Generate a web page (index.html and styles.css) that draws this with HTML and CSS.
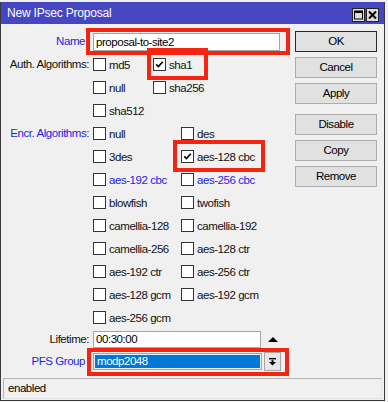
FILE: index.html
```html
<!DOCTYPE html>
<html>
<head>
<meta charset="utf-8">
<link rel="stylesheet" href="styles.css">
</head>
<body>
<div class="window">
  <div class="titlebar">
    <span class="title">New IPsec Proposal</span>
    <span class="tbtns">
      <span class="tbtn"><svg width="11" height="12" viewBox="0 0 11 12"><rect x="1.5" y="2" width="8" height="8" fill="none" stroke="#000" stroke-width="1"/><rect x="1.5" y="2" width="8" height="2" fill="#000"/></svg></span>
      <span class="tbtn"><svg width="11" height="12" viewBox="0 0 11 12"><path d="M2 2.5 L9 9.5 M9 2.5 L2 9.5" stroke="#000" stroke-width="2"/></svg></span>
    </span>
  </div>
  <div class="main">
    <div class="form">
      <div class="row">
        <div class="lbl blue pad">Name</div>
        <div class="field">
          <span class="hl hl-name"><span class="input name-input">proposal-to-site2</span></span>
        </div>
      </div>
      <div class="row">
        <div class="lbl">Auth. Algorithms:</div>
        <div class="checks auth">
          <span class="cb"><span class="box"></span>md5</span>
          <span class="cb hl hl-sha1"><span class="box"><svg width="11" height="11" viewBox="0 0 11 11"><path d="M2.2 5.4 L4.4 7.6 L8.8 2.8" fill="none" stroke="#000" stroke-width="1.7"/></svg></span>sha1</span>
          <span class="cb"><span class="box"></span>null</span>
          <span class="cb"><span class="box"></span>sha256</span>
          <span class="cb"><span class="box"></span>sha512</span>
        </div>
      </div>
      <div class="row">
        <div class="lbl blue">Encr. Algorithms:</div>
        <div class="checks encr">
          <span class="cb"><span class="box"></span>null</span>
          <span class="cb"><span class="box"></span>des</span>
          <span class="cb"><span class="box"></span>3des</span>
          <span class="cb hl hl-aes"><span class="box"><svg width="11" height="11" viewBox="0 0 11 11"><path d="M2.2 5.4 L4.4 7.6 L8.8 2.8" fill="none" stroke="#000" stroke-width="1.7"/></svg></span>aes-128 cbc</span>
          <span class="cb blue"><span class="box"></span>aes-192 cbc</span>
          <span class="cb blue"><span class="box"></span>aes-256 cbc</span>
          <span class="cb"><span class="box"></span>blowfish</span>
          <span class="cb"><span class="box"></span>twofish</span>
          <span class="cb"><span class="box"></span>camellia-128</span>
          <span class="cb"><span class="box"></span>camellia-192</span>
          <span class="cb"><span class="box"></span>camellia-256</span>
          <span class="cb"><span class="box"></span>aes-128 ctr</span>
          <span class="cb"><span class="box"></span>aes-192 ctr</span>
          <span class="cb"><span class="box"></span>aes-256 ctr</span>
          <span class="cb"><span class="box"></span>aes-128 gcm</span>
          <span class="cb"><span class="box"></span>aes-192 gcm</span>
          <span class="cb"><span class="box"></span>aes-256 gcm</span>
        </div>
      </div>
      <div class="row life">
        <div class="lbl">Lifetime:</div>
        <div class="field">
          <span class="input life-input">00:30:00</span>
          <span class="uptri"></span>
        </div>
      </div>
      <div class="row pfs">
        <div class="lbl blue pad">PFS Group</div>
        <div class="field">
          <span class="hl hl-pfs">
            <span class="select">modp2048</span>
            <span class="dd"><svg width="9" height="10" viewBox="0 0 9 10"><rect x="1" y="1" width="7" height="1.4" fill="#000"/><rect x="3.5" y="3.2" width="2" height="2" fill="#000"/><path d="M1 5 H8 L4.5 8.6 Z" fill="#000"/></svg></span>
          </span>
        </div>
      </div>
    </div>
    <div class="actions">
      <span class="btn default">OK</span>
      <span class="btn">Cancel</span>
      <span class="btn">Apply</span>
      <span class="btn sep">Disable</span>
      <span class="btn">Copy</span>
      <span class="btn">Remove</span>
    </div>
  </div>
  <div class="status">enabled</div>
</div>
</body>
</html>
```

FILE: styles.css
```css
html, body {
  margin: 0;
  padding: 0;
}
body {
  width: 388px;
  height: 402px;
  overflow: hidden;
  background: #f0f0f0;
  font-family: "Liberation Sans", Arial, sans-serif;
  font-size: 11.5px;
  letter-spacing: -0.45px;
  color: #111;
}
.window {
  margin-top: 2px;
  width: 385px;
  height: 399px;
  box-sizing: border-box;
  border: 1px solid #3a3a3a;
  border-top: none;
  background: #f0f0f0;
  display: flex;
  flex-direction: column;
}
.titlebar {
  height: 22px;
  background: #4646c3;
  display: flex;
  justify-content: space-between;
  align-items: flex-end;
  padding: 0 5px 2px 6px;
  box-sizing: border-box;
}
.title {
  color: #fff;
  font-size: 12px;
  letter-spacing: -0.2px;
  line-height: 20px;
  align-self: center;
  padding-top: 2px;
}
.tbtns {
  display: flex;
  gap: 1px;
}
.tbtn {
  width: 13px;
  height: 14px;
  box-sizing: border-box;
  border: 1px solid #222;
  background: #dcdcdc;
  display: flex;
  align-items: center;
  justify-content: center;
}
.tbtn svg { display: block; }
.main {
  display: flex;
  padding-top: 6px;
}
.form {
  flex: 1;
}
.row {
  display: grid;
  grid-template-columns: 88px 1fr;
  column-gap: 4px;
  align-items: start;
}
.lbl {
  text-align: right;
  line-height: 23px;
  white-space: nowrap;
}
.lbl.pad { padding-right: 4px; }
.blue { color: #1c1cf2; }
.field {
  height: 23px;
  display: flex;
  align-items: center;
}
.hl {
  position: relative;
}
.hl::after {
  content: "";
  position: absolute;
  border: 4px solid #f52410;
  pointer-events: none;
}
.hl-name::after { left: -7px; top: -5px; right: -10px; bottom: -4px; }
.hl-sha1::after { left: -6px; top: -5px; right: -16px; bottom: -4px; }
.hl-aes::after { left: -8px; top: -5px; right: -10px; bottom: -4px; }
.hl-pfs::after { left: -6px; top: -4px; right: -8px; bottom: -5px; }
.input {
  display: block;
  box-sizing: border-box;
  background: #fff;
  border: 1px solid #a5a5a5;
  padding-left: 2px;
  color: #000;
}
.name-input {
  width: 187px;
  height: 18px;
  line-height: 16px;
}
.life .field { height: 21px; }
.life .lbl { line-height: 21px; }
.life-input {
  width: 168px;
  height: 17px;
  line-height: 15px;
}
.uptri {
  width: 0;
  height: 0;
  margin-left: 7px;
  margin-top: -1px;
  border-left: 5px solid transparent;
  border-right: 5px solid transparent;
  border-bottom: 5px solid #000;
}
.hl-pfs {
  display: flex;
  align-items: center;
  gap: 2px;
}
.pfs .lbl { line-height: 23px; }
.select {
  display: block;
  width: 169px;
  height: 17px;
  box-sizing: border-box;
  border: 1px solid #a5a5a5;
  background: #0078d7;
  box-shadow: inset 0 0 0 1px #e8f0fa;
  color: #fff;
  line-height: 15px;
  padding-left: 3px;
}
.dd {
  width: 17px;
  height: 19px;
  box-sizing: border-box;
  border: 1px solid #a5a5a5;
  background: #e6e6e6;
  display: flex;
  align-items: center;
  justify-content: center;
}
.dd svg { display: block; }
.checks {
  display: grid;
  grid-auto-rows: 23px;
}
.checks.auth { grid-template-columns: 60px 1fr; }
.checks.encr { grid-template-columns: 88px 1fr; }
.cb {
  display: flex;
  align-items: center;
  gap: 3px;
  white-space: nowrap;
  justify-self: start;
  height: 23px;
}
.box {
  width: 13px;
  height: 13px;
  box-sizing: border-box;
  border: 1px solid #333;
  background: #fff;
  display: flex;
  align-items: center;
  justify-content: center;
  flex: none;
}
.box svg { display: block; }
.actions {
  width: 82px;
  margin-right: 7px;
  margin-left: 4px;
  padding-top: 1px;
  display: flex;
  flex-direction: column;
  gap: 5px;
}
.btn {
  display: block;
  height: 21px;
  box-sizing: border-box;
  border: 1px solid #adadad;
  background: #e1e1e1;
  text-align: center;
  line-height: 19px;
  color: #000;
}
.btn.default { border-color: #2a2a2a; }
.btn.sep { margin-top: 5px; }
.status {
  margin: auto 2px 1px 2px;
  height: 21px;
  box-sizing: border-box;
  border: 1px solid #b4b4b4;
  border-right-color: #e4e4e4;
  border-bottom-color: #e4e4e4;
  line-height: 19px;
  padding-left: 4px;
  color: #000;
}
```
